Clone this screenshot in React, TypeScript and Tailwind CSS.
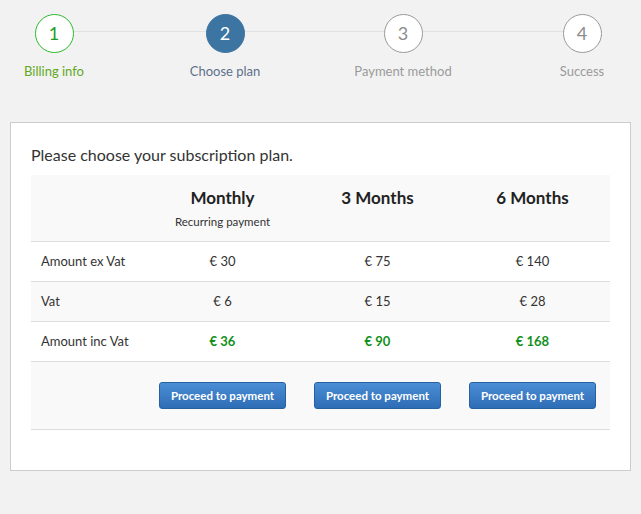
const font = { fontFamily: 'Lato, "Noto Sans", sans-serif' }

const steps = [
  { n: 1, label: 'Billing info', state: 'done' },
  { n: 2, label: 'Choose plan', state: 'active' },
  { n: 3, label: 'Payment method', state: 'todo' },
  { n: 4, label: 'Success', state: 'todo' },
]

const plans = [
  { name: 'Monthly', sub: 'Recurring payment', ex: '€ 30', vat: '€ 6', inc: '€ 36' },
  { name: '3 Months', sub: '', ex: '€ 75', vat: '€ 15', inc: '€ 90' },
  { name: '6 Months', sub: '', ex: '€ 140', vat: '€ 28', inc: '€ 168' },
]

function Step({ n, label, state }: { n: number; label: string; state: string }) {
  const circle =
    state === 'done'
      ? 'border-[#2dbb2d] bg-white text-[#1e9e1e]'
      : state === 'active'
        ? 'border-[#3c74a2] bg-[#3c74a2] text-white'
        : 'border-[#9a9a9a] bg-white text-[#8c8c8c]'
  const text =
    state === 'done' ? 'text-[#62a824]' : state === 'active' ? 'text-[#5e708a]' : 'text-[#9a9a9a]'
  return (
    <div className="relative z-10 flex w-[100px] flex-col items-center">
      <div
        className={`flex h-[39px] w-[39px] items-center justify-center rounded-full border text-[18px] ${circle}`}
      >
        {n}
      </div>
      <div className={`mt-[10px] whitespace-nowrap text-[13px] leading-4 ${text}`}>{label}</div>
    </div>
  )
}

function PayButton() {
  return (
    <button className="h-[27px] w-[127px] rounded-[3px] border border-[#25609f] bg-gradient-to-b from-[#4b8ed6] to-[#2d6db5] text-[11.5px] font-bold text-white">
      Proceed to payment
    </button>
  )
}

export default function App() {
  const cell = 'w-[155px] text-center'
  return (
    <div className="min-h-[514px] bg-[#f2f2f2] text-[#333]" style={font}>
      <div className="relative flex h-[108px] pl-[4px] pt-[14px]">
        <div className="absolute left-[73px] right-[59px] top-[31px] h-px bg-[#e2e2e2]" />
        <Step {...steps[0]} />
        <div className="ml-[71px]">
          <Step {...steps[1]} />
        </div>
        <div className="ml-[78px]">
          <Step {...steps[2]} />
        </div>
        <div className="ml-[79px]">
          <Step {...steps[3]} />
        </div>
      </div>

      <div className="mx-[10px] mt-[14px] h-[349px] w-[621px] border border-[#cccccc] bg-white px-[20px] pt-[22px]">
        <p className="text-[16px] leading-5">Please choose your subscription plan.</p>
        <div className="mt-[10px] w-[579px]">
          <div className="flex h-[67px] border-b border-[#dddddd] bg-[#f9f9f9] pt-[13px]">
            <div className="w-[114px]" />
            {plans.map((p) => (
              <div key={p.name} className={cell}>
                <div className="text-[17px] font-bold leading-5 text-[#222]">{p.name}</div>
                {p.sub && <div className="mt-[6px] text-[11.5px] leading-4">{p.sub}</div>}
              </div>
            ))}
          </div>
          <div className="flex h-[40px] items-center border-b border-[#dddddd] text-[13px]">
            <div className="w-[114px] pl-[10px]">Amount ex Vat</div>
            {plans.map((p) => (
              <div key={p.name} className={cell}>
                {p.ex}
              </div>
            ))}
          </div>
          <div className="flex h-[40px] items-center border-b border-[#dddddd] bg-[#f9f9f9] text-[13px]">
            <div className="w-[114px] pl-[10px]">Vat</div>
            {plans.map((p) => (
              <div key={p.name} className={cell}>
                {p.vat}
              </div>
            ))}
          </div>
          <div className="flex h-[40px] items-center border-b border-[#dddddd] text-[13px]">
            <div className="w-[114px] pl-[10px]">Amount inc Vat</div>
            {plans.map((p) => (
              <div key={p.name} className={`${cell} font-bold text-[#12901a]`}>
                {p.inc}
              </div>
            ))}
          </div>
          <div className="flex h-[68px] items-center border-b border-[#dddddd] bg-[#f9f9f9]">
            <div className="w-[114px]" />
            {plans.map((p) => (
              <div key={p.name} className={`${cell} flex justify-center`}>
                <PayButton />
              </div>
            ))}
          </div>
        </div>
      </div>
    </div>
  )
}
